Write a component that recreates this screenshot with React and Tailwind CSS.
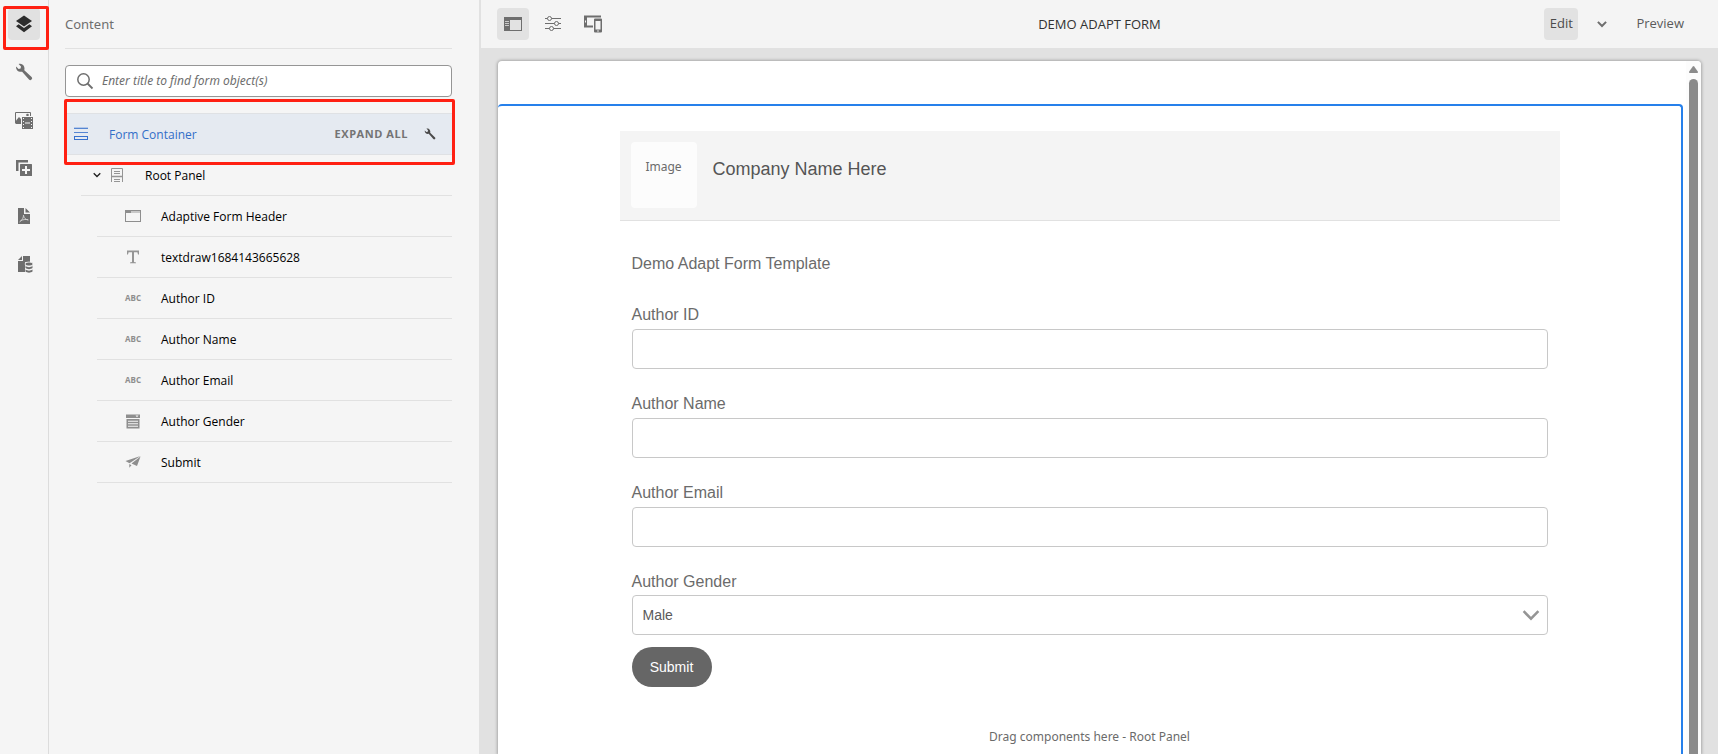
import { Fragment } from "react";

const LayersIcon = () => (
  <svg width="18" height="18" viewBox="0 0 18 18" fill="#2c2c2c" aria-hidden="true">
    <path d="M9 0.5 17 6 9 11.5 1 6Z" />
    <path d="M3.6 9.3 9 13 14.4 9.3 17 11.2 9 17.2 1 11.2Z" />
  </svg>
);

const WrenchIcon = ({ size = 18, color = "#6e6e6e" }) => (
  <svg width={size} height={size} viewBox="0 0 18 18" fill={color} aria-hidden="true">
    <path d="M16.6 14.1 9.3 7.2C9.9 4.9 9.2 2.6 7.4 1.4 6.2.6 4.8.5 3.6.9L6 3.4 5.6 5.6 3.6 6 1.1 3.6C.9 5 1.3 6.4 2.3 7.4 3.7 8.8 5.5 9.1 7.1 8.7L14 16.5A1.7 1.7 0 0 0 16.5 16.6 1.7 1.7 0 0 0 16.6 14.1Z" />
  </svg>
);

const AssetsIcon = () => (
  <svg width="20" height="18" viewBox="0 0 20 18" aria-hidden="true">
    <path d="M1.5 12.5V1.5H16.500V5" fill="none" stroke="#6e6e6e" />
    <path d="M2 9.500 5 6 8 9V13H2Z" fill="#6e6e6e" />
    <circle cx="13.500" cy="4" r="1.300" fill="#6e6e6e" />
    <rect x="7.500" y="5.500" width="12" height="13" fill="#6e6e6e" stroke="#f5f5f5" />
    <path d="M9 7.500h1M9 10.500h1M9 13.500h1M9 16.500h1M17 7.500h1M17 10.500h1M17 13.500h1M17 16.500h1M11 12h5" stroke="#f5f5f5" />
  </svg>
);

const AddComponentIcon = () => (
  <svg width="18" height="18" viewBox="0 0 18 18" aria-hidden="true">
    <path d="M1 1H13V3.500H3.500V12H1Z" fill="#6e6e6e" />
    <rect x="5" y="5" width="12" height="12" rx="0.500" fill="#6e6e6e" />
    <path d="M11 7v8M7 11h8" stroke="#f5f5f5" strokeWidth="2" />
  </svg>
);

const PdfIcon = () => (
  <svg width="18" height="18" viewBox="0 0 18 18" aria-hidden="true">
    <path d="M3 1H9V7H15V17H3Z" fill="#6e6e6e" />
    <path d="M10.500 1 15 5.500H10.500Z" fill="#6e6e6e" />
    <path d="M8.500 8C8.500 10.500 7.500 13 4.500 15M8.600 8.500C8.800 11 10.500 12.700 13.500 13M5.500 13.800C8 12.500 10.500 12.200 13 12.700" fill="none" stroke="#d5d5d5" strokeWidth="0.900" />
  </svg>
);

const DataIcon = () => (
  <svg width="18" height="18" viewBox="0 0 18 18" aria-hidden="true">
    <path d="M3 6H8V1H15V7H10V17H3Z" fill="#6e6e6e" />
    <path d="M3 5 7 1V5Z" fill="#6e6e6e" />
    <ellipse cx="14" cy="9" rx="4" ry="2" fill="#6e6e6e" stroke="#f5f5f5" strokeWidth="0.800" />
    <path d="M10.500 11c1.800 1.500 5.200 1.500 7 0v2c-1.800 1.500-5.200 1.500-7 0ZM10.500 14.500c1.800 1.500 5.200 1.500 7 0v2c-1.800 1.500-5.200 1.500-7 0Z" fill="#6e6e6e" />
  </svg>
);

const SearchIcon = () => (
  <svg width="18" height="18" viewBox="0 0 18 18" fill="none" stroke="#6e6e6e" strokeWidth="1.500" aria-hidden="true">
    <circle cx="7.500" cy="7.500" r="5.700" />
    <path d="M11.500 11.500 16.500 16.500" strokeWidth="1.800" />
  </svg>
);

const ContainerIcon = () => (
  <svg width="16" height="14" viewBox="0 0 16 14" aria-hidden="true">
    <path d="M1 0.500H15" stroke="#b4c8e8" />
    <path d="M1 1.500H15M1 5.500H15" stroke="#5585d2" />
    <rect x="1.500" y="9.500" width="13" height="3" fill="none" stroke="#3871cd" />
  </svg>
);

const ChevronIcon = ({ size = 10, color = "#6e6e6e", width = 2 }) => (
  <svg width={size} height={size} viewBox="0 0 10 10" fill="none" stroke={color} strokeWidth={width} aria-hidden="true">
    <path d="M0.900 2.900 5 7 9.100 2.900" />
  </svg>
);

const PanelIcon = () => (
  <svg width="14" height="16" viewBox="0 0 14 16" fill="none" stroke="#959595" aria-hidden="true">
    <path d="M1.500 9V1.500H12.500V9M4 4.500H10M4 6.500H10" />
    <path d="M1 9.500H13" strokeWidth="1.500" />
    <path d="M1.500 10V15M12.500 10V15M4 12.500H10M4 14.500H10" />
  </svg>
);

const HeaderIcon = () => (
  <svg width="16" height="14" viewBox="0 0 16 14" aria-hidden="true">
    <path d="M6 1.500H15.500V4H6Z" fill="#c8c8c8" />
    <rect x="0.500" y="1.500" width="15" height="11" fill="none" stroke="#8e8e8e" />
    <path d="M0 1H6V4H0Z" fill="#8e8e8e" />
  </svg>
);

const TextIcon = () => (
  <svg width="14" height="14" viewBox="0 0 14 14" fill="#959595" aria-hidden="true">
    <path d="M1 0.500H13V4.500H12L11.400 2.300H8V12L10 12.400V13.300H4V12.400L6 12V2.300H2.600L2 4.500H1Z" />
  </svg>
);

const DropdownIcon = () => (
  <svg width="14" height="15" viewBox="0 0 14 15" aria-hidden="true">
    <path d="M0 0.500H14V4H0ZM0.500 5H13.500V14.500H0.500Z" fill="#8e8e8e" />
    <path d="M9.500 1.500H12.500L11 3.200ZM2 6.800H12V7.800H2ZM2 9.300H12V10.300H2ZM2 11.800H12V12.800H2Z" fill="#f5f5f5" />
  </svg>
);

const SendIcon = () => (
  <svg width="16" height="14" viewBox="0 0 16 14" fill="#8e8e8e" aria-hidden="true">
    <path d="M0.500 6 15.500 1 4.500 8.300ZM15.500 1.500 12 11 6.500 8.600ZM4.300 9 6.500 10.200 4.300 12.800Z" />
  </svg>
);

const AbcIcon = () => <span className="font-['Open_Sans',sans-serif] text-[8px] font-bold leading-4 text-[#8e8e8e]">ABC</span>;

const SidePanelIcon = () => (
  <svg width="18" height="16" viewBox="0 0 18 16" aria-hidden="true">
    <path d="M0 1H18V15H0ZM6 4V14H17V4Z" fill="#6e6e6e" fillRule="evenodd" />
    <path d="M1 5.500H5M1 7.500H5M1 9.500H5" stroke="#e1e1e1" strokeWidth="0.800" />
  </svg>
);

const SlidersIcon = () => (
  <svg width="16" height="16" viewBox="0 0 16 16" fill="#f4f4f4" stroke="#6e6e6e" aria-hidden="true">
    <path d="M0 2.500H16M0 7.500H16M0 12.500H16" />
    <circle cx="4.500" cy="2.500" r="2" />
    <circle cx="11.500" cy="7.500" r="2" />
    <circle cx="6.500" cy="12.500" r="2" />
  </svg>
);

const DevicesIcon = () => (
  <svg width="18" height="18" viewBox="0 0 18 18" aria-hidden="true">
    <path d="M0 0.500H17V2.500H3V10.500H9V12.500H0ZM1 5.500V7.500H2V5.500Z" fill="#6e6e6e" fillRule="evenodd" />
    <path d="M10 4.500Q10 3.500 11 3.500H17Q18 3.500 18 4.500V16.500Q18 17.500 17 17.500H11Q10 17.500 10 16.500ZM11.500 6V14.500H16.500V6Z" fill="#6e6e6e" fillRule="evenodd" />
    <circle cx="14" cy="16" r="0.800" fill="#f4f4f4" />
  </svg>
);

const railItems = [
  { label: "Content", Icon: LayersIcon, active: true },
  { label: "Properties", Icon: WrenchIcon },
  { label: "Assets", Icon: AssetsIcon },
  { label: "Components", Icon: AddComponentIcon },
  { label: "Form model", Icon: PdfIcon },
  { label: "Data sources", Icon: DataIcon },
];

const treeItems = [
  { label: "Adaptive Form Header", Icon: HeaderIcon },
  { label: "textdraw1684143665628", Icon: TextIcon },
  { label: "Author ID", Icon: AbcIcon },
  { label: "Author Name", Icon: AbcIcon },
  { label: "Author Email", Icon: AbcIcon },
  { label: "Author Gender", Icon: DropdownIcon },
  { label: "Submit", Icon: SendIcon },
];

const fields = [
  { id: "author-id", label: "Author ID" },
  { id: "author-name", label: "Author Name" },
  { id: "author-email", label: "Author Email" },
];

function Rail() {
  return (
    <nav className="relative flex w-[49px] shrink-0 flex-col items-center gap-4 border-r border-[#dcdcdc] py-2">
      {railItems.map(({ label, Icon, active }) => (
        <button
          key={label}
          type="button"
          aria-label={label}
          className={`flex size-8 items-center justify-center rounded ${active ? "bg-[#e1e1e1]" : ""}`}
        >
          <Icon />
        </button>
      ))}
      <div className="pointer-events-none absolute top-[6px] left-[3px] z-10 h-11 w-[46px] rounded-xs border-3 border-[#ff2012]" />
    </nav>
  );
}

function ContentPanel() {
  return (
    <aside className="w-[432px] shrink-0 border-r-2 border-[#e1e1e1] pr-[27px] pl-4">
      <h2 className="h-12 text-[13px] leading-12 text-[#6e6e6e]">Content</h2>
      <div className="h-px bg-[#e1e1e1]" />
      <label className="mt-4 flex h-8 items-center gap-2 rounded border border-[#959595] bg-white px-[10px]">
        <SearchIcon />
        <input
          type="text"
          aria-label="Find form objects"
          placeholder="Enter title to find form object(s)"
          className="min-w-0 flex-1 text-xs italic outline-none placeholder:text-[#6e6e6e]"
        />
      </label>

      <div className="relative mt-4 flex h-[42px] items-center border-y border-[#dfe1e4] bg-[#e5eaf1] pl-2 font-['Open_Sans',sans-serif] text-xs">
        <ContainerIcon />
        <a href="#form-container" className="ml-5 flex-1 pt-[2px] text-[#326ec8]">Form Container</a>
        <button type="button" className="text-[11px] font-bold tracking-wider text-[#747474]">EXPAND ALL</button>
        <button type="button" aria-label="Configure" className="mr-4 ml-4">
          <WrenchIcon size={12} color="#4b4b4b" />
        </button>
        <div className="pointer-events-none absolute -top-[15px] -right-[3px] -bottom-[11px] -left-px rounded-xs border-3 border-[#ff2012]" />
      </div>

      <ul className="font-['Open_Sans',sans-serif] text-xs text-black">
        <li className="ml-4 flex h-[41px] items-center border-b border-[#e1e1e1] pl-3">
          <button type="button" aria-label="Collapse Root Panel">
            <ChevronIcon size={8} color="#222222" width={1.7} />
          </button>
          <span className="mr-5 ml-2 flex w-4 justify-center"><PanelIcon /></span>
          <span className="pt-[2px]">Root Panel</span>
        </li>
        {treeItems.map(({ label, Icon }) => (
          <li key={label} className="ml-8 flex h-[41px] items-center border-b border-[#e1e1e1] pl-7">
            <span className="mr-5 flex w-4 justify-center"><Icon /></span>
            <span className="pt-[2px]">{label}</span>
          </li>
        ))}
      </ul>
    </aside>
  );
}

function Toolbar() {
  return (
    <header className="grid h-12 shrink-0 grid-cols-[1fr_auto_1fr] items-center bg-[#f4f4f4] text-[13px]">
      <div className="flex gap-2 pl-4">
        <button type="button" aria-label="Toggle side panel" className="flex size-8 items-center justify-center rounded bg-[#e2e2e2]">
          <SidePanelIcon />
        </button>
        <button type="button" aria-label="Page information" className="flex size-8 items-center justify-center">
          <SlidersIcon />
        </button>
        <button type="button" aria-label="Emulator" className="flex size-8 items-center justify-center">
          <DevicesIcon />
        </button>
      </div>
      <h1 className="pt-[2px] font-['Open_Sans',sans-serif] text-[#323232]">DEMO ADAPT FORM</h1>
      <div className="flex items-center justify-end pr-[34px] font-['Open_Sans',sans-serif] text-[#5a5a5a]">
        <button type="button" className="h-8 w-[34px] rounded bg-[#e2e2e2] text-[#4b4b4b]">Edit</button>
        <button type="button" aria-label="Change mode" className="flex h-8 w-12 items-center justify-center">
          <ChevronIcon />
        </button>
        <button type="button" className="h-8 pl-[10px]">Preview</button>
      </div>
    </header>
  );
}

function Form() {
  return (
    <form className="mx-auto mt-[25px] w-full max-w-[940px] font-['Liberation_Sans',sans-serif] text-base text-[#6b6b6b]" onSubmit={(e) => e.preventDefault()}>
      <div className="flex h-[90px] gap-4 border-b border-[#e1e1e1] bg-[#f4f4f4] px-[11px] pt-[11px]">
        <div className="h-[66px] w-[66px] rounded bg-[#fcfcfc] pt-[15px] text-center font-['Noto_Sans',sans-serif] text-xs leading-5">Image</div>
        <div className="pt-[13px] text-lg leading-7 text-[#555555]">Company Name Here</div>
      </div>
      <div className="px-3">
        <p className="mt-[31px] mb-[27px] leading-6">Demo Adapt Form Template</p>
        {fields.map(({ id, label }) => (
          <Fragment key={id}>
            <label htmlFor={id} className="block leading-6">{label}</label>
            <input id={id} type="text" className="mt-[2px] mb-[23px] block h-10 w-full rounded border border-[#c8c8c8] bg-white px-[10px] text-sm" />
          </Fragment>
        ))}
        <label htmlFor="author-gender" className="block leading-6">Author Gender</label>
        <div className="relative mt-px">
          <select id="author-gender" className="block h-10 w-full appearance-none rounded border border-[#c8c8c8] bg-white px-[10px] text-sm text-[#5a5a5a]">
            <option>Male</option>
            <option>Female</option>
          </select>
          <span className="pointer-events-none absolute inset-y-0 right-2 flex items-center">
            <ChevronIcon size={18} color="#959595" width={1.4} />
          </span>
        </div>
        <button type="submit" className="mt-3 block h-10 w-20 rounded-full bg-[#666666] text-sm text-white">Submit</button>
      </div>
      <p className="mt-10 text-center font-['Noto_Sans',sans-serif] text-xs leading-5">Drag components here - Root Panel</p>
    </form>
  );
}

export default function App() {
  return (
    <div className="flex h-screen overflow-hidden bg-[#f5f5f5] font-['Noto_Sans',sans-serif]">
      <Rail />
      <ContentPanel />
      <main className="flex min-w-0 flex-1 flex-col bg-[#e1e1e1]">
        <Toolbar />
        <div className="mt-[13px] mr-[17px] ml-[17px] flex min-h-0 flex-1 rounded-t bg-white shadow-[0_0_3px_1px_rgba(0,0,0,0.25)]">
          <section className="mt-[43px] flex min-w-0 flex-1 flex-col rounded-t border-2 border-b-0 border-l-0 border-[#2680eb]">
            <Form />
          </section>
          <div className="ml-[3px] flex w-[15px] shrink-0 flex-col items-center rounded-tr bg-[#fcfcfc] pt-[5px]">
            <svg width="9" height="7" viewBox="0 0 9 7" fill="#8b8b8b" aria-hidden="true">
              <path d="M3.800 0.500Q4.500 -0.300 5.200 0.500L8.800 5.500Q9.200 7 8 7H1Q-0.200 7 0.200 5.500Z" />
            </svg>
            <div className="mt-[6px] w-[9px] flex-1 rounded-t-full bg-[#8b8b8b]" />
          </div>
        </div>
      </main>
    </div>
  );
}
